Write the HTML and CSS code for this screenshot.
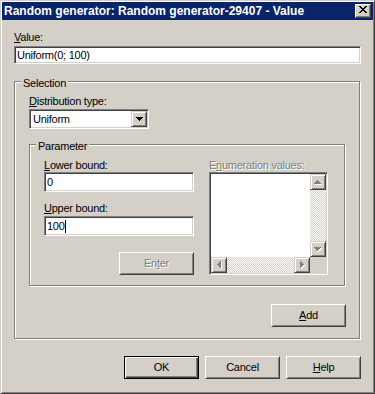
FILE: index.html
```html
<!DOCTYPE html>
<html lang="en">
<head>
    <meta charset="UTF-8">
    <title>Random generator: Random generator-29407 - Value</title>
    <link rel="stylesheet" href="styles.css">
</head>
<body>

    <div class="dialog">
        <div class="titlebar">
            <span class="title">Random generator: Random generator-29407 - Value</span>
            <span class="close-btn">
                <svg width="8" height="7" viewBox="0 0 8 7" shape-rendering="crispEdges">
                    <path d="M0 0h2v1h-2zM6 0h2v1h-2zM1 1h2v1h-2zM5 1h2v1h-2zM2 2h4v1h-4zM3 3h2v1h-2zM2 4h4v1h-4zM1 5h2v1h-2zM5 5h2v1h-2zM0 6h2v1h-2zM6 6h2v1h-2z" fill="#000"/>
                </svg>
            </span>
        </div>

        <div class="content">
            <div class="label"><u>V</u>alue:</div>
            <div class="field field-value">Uniform(0; 100)</div>

            <div class="group group-selection">
                <div class="group-title">Selection</div>
                <div class="label label-dist"><u>D</u>istribution type:</div>
                <div class="combo">
                    <span class="combo-text">Uniform</span>
                    <span class="combo-btn">
                        <svg width="7" height="4" viewBox="0 0 7 4" shape-rendering="crispEdges">
                            <path d="M0 0h7v1h-7zM1 1h5v1h-5zM2 2h3v1h-3zM3 3h1v1h-1z" fill="#000"/>
                        </svg>
                    </span>
                </div>

                <div class="group group-param">
                    <div class="group-title">Parameter</div>
                    <div class="param-cols">
                        <div class="param-left">
                            <div class="label"><u>L</u>ower bound:</div>
                            <div class="field field-bound">0</div>
                            <div class="label label-upper"><u>U</u>pper bound:</div>
                            <div class="field field-bound field-upper">100<span class="caret"></span></div>
                            <button class="btn btn-enter" disabled>En<u>t</u>er</button>
                        </div>
                        <div class="param-right">
                            <div class="label disabled">E<u>n</u>umeration values:</div>
                            <div class="listbox">
                                <div class="list-area"></div>
                                <div class="vscroll">
                                    <span class="sb-btn">
                                        <svg width="8" height="5" viewBox="0 0 8 5" shape-rendering="crispEdges">
                                            <path d="M4 1h1v1h-1zM3 2h3v1h-3zM2 3h5v1h-5zM1 4h7v1h-7z" fill="#fff"/>
                                            <path d="M3 0h1v1h-1zM2 1h3v1h-3zM1 2h5v1h-5zM0 3h7v1h-7z" fill="#808080"/>
                                        </svg>
                                    </span>
                                    <span class="sb-track"></span>
                                    <span class="sb-btn">
                                        <svg width="8" height="5" viewBox="0 0 8 5" shape-rendering="crispEdges">
                                            <path d="M1 1h7v1h-7zM2 2h5v1h-5zM3 3h3v1h-3zM4 4h1v1h-1z" fill="#fff"/>
                                            <path d="M0 0h7v1h-7zM1 1h5v1h-5zM2 2h3v1h-3zM3 3h1v1h-1z" fill="#808080"/>
                                        </svg>
                                    </span>
                                </div>
                                <div class="hscroll">
                                    <span class="sb-btn">
                                        <svg width="5" height="8" viewBox="0 0 5 8" shape-rendering="crispEdges">
                                            <path d="M1 4h1v1h-1zM2 3h1v3h-1zM3 2h1v5h-1zM4 1h1v7h-1z" fill="#fff"/>
                                            <path d="M0 3h1v1h-1zM1 2h1v3h-1zM2 1h1v5h-1zM3 0h1v7h-1z" fill="#808080"/>
                                        </svg>
                                    </span>
                                    <span class="sb-track"></span>
                                    <span class="sb-btn">
                                        <svg width="5" height="8" viewBox="0 0 5 8" shape-rendering="crispEdges">
                                            <path d="M1 1h1v7h-1zM2 2h1v5h-1zM3 3h1v3h-1zM4 4h1v1h-1z" fill="#fff"/>
                                            <path d="M0 0h1v7h-1zM1 1h1v5h-1zM2 2h1v3h-1zM3 3h1v1h-1z" fill="#808080"/>
                                        </svg>
                                    </span>
                                </div>
                                <div class="corner"></div>
                            </div>
                        </div>
                    </div>
                </div>

                <button class="btn btn-add"><u>A</u>dd</button>
            </div>

            <div class="actions">
                <button class="btn btn-default">OK</button>
                <button class="btn">Cancel</button>
                <button class="btn"><u>H</u>elp</button>
            </div>
        </div>
    </div>

</body>
</html>
```

FILE: styles.css
```css
body {
    margin: 0;
    padding: 0;
    background-color: #d4d0c8;
    font-family: 'Liberation Sans', Arial, sans-serif;
    font-size: 11px;
    letter-spacing: -0.25px;
    color: #000;
}

/* window frame */
.dialog {
    width: 375px;
    height: 394px;
    box-sizing: border-box;
    padding: 1px;
    border: 1px solid;
    border-color: #d4d0c8 #404040 #404040 #d4d0c8;
    box-shadow: inset 1px 1px #fff, inset -1px -1px #808080;
    background-color: #d4d0c8;
    display: flex;
    flex-direction: column;
}

.titlebar {
    height: 18px;
    background-color: #0a246a;
    display: flex;
    align-items: center;
    justify-content: space-between;
    padding: 0 2px;
}

.title {
    font-weight: bold;
    font-size: 12px;
    letter-spacing: 0;
    line-height: 17px;
    padding-top: 1px;
    color: #fff;
    white-space: nowrap;
}

.close-btn {
    width: 16px;
    height: 14px;
    box-sizing: border-box;
    border: 1px solid;
    border-color: #fff #404040 #404040 #fff;
    box-shadow: inset -1px -1px #808080;
    background-color: #d4d0c8;
    display: flex;
    justify-content: center;
    align-items: flex-start;
    padding-top: 1px;
}

.close-btn svg {
    display: block;
}

.content {
    padding: 11px 12px 0 12px;
    display: flex;
    flex-direction: column;
}

.label {
    line-height: 13px;
    white-space: nowrap;
}

.disabled {
    color: #808080;
    text-shadow: 1px 1px #fff;
}

/* sunken edit fields */
.field,
.combo,
.listbox {
    box-sizing: border-box;
    border: 1px solid;
    border-color: #808080 #fff #fff #808080;
    box-shadow: inset 1px 1px #404040, inset -1px -1px #d4d0c8;
    background-color: #fff;
}

.field {
    padding: 1px 2px;
    white-space: nowrap;
}

.field-value {
    margin-top: 2px;
    height: 18px;
    line-height: 14px;
}

.field-bound {
    height: 20px;
    line-height: 16px;
}

.field-upper {
    margin-top: 1px;
}

.caret {
    display: inline-block;
    width: 1px;
    height: 13px;
    background-color: #000;
    vertical-align: -3px;
}

/* etched group boxes */
.group {
    border: 1px solid #808080;
    box-shadow: inset 1px 1px #fff, 1px 1px #fff;
    display: flex;
    flex-direction: column;
    margin-right: 1px;
}

.group-title {
    align-self: flex-start;
    line-height: 13px;
    margin: -5px 0 0 -8px;
    padding: 0 2px;
    background-color: #d4d0c8;
}

.group-selection {
    margin-top: 17px;
    padding: 0 13px 11px 14px;
}

.label-dist {
    margin-top: 5px;
}

.combo {
    margin-top: 1px;
    width: 120px;
    height: 20px;
    padding: 1px;
    display: flex;
    align-self: flex-start;
}

.combo-text {
    flex: 1;
    line-height: 16px;
    padding-left: 2px;
}

.combo-btn {
    width: 16px;
    height: 16px;
    box-sizing: border-box;
    border: 1px solid;
    border-color: #d4d0c8 #404040 #404040 #d4d0c8;
    box-shadow: inset 1px 1px #fff, inset -1px -1px #808080;
    background-color: #d4d0c8;
    display: flex;
    align-items: center;
    justify-content: center;
}

.group-param {
    margin-top: 15px;
    padding: 0 14px 10px 14px;
}

.param-cols {
    margin-top: 6px;
    display: flex;
    gap: 15px;
    align-items: flex-start;
}

.param-left {
    width: 150px;
    display: flex;
    flex-direction: column;
}

.label-upper {
    margin-top: 10px;
}

.param-right {
    width: 119px;
    display: flex;
    flex-direction: column;
}

.listbox {
    height: 103px;
    padding: 1px;
    display: grid;
    grid-template-columns: 1fr 16px;
    grid-template-rows: 1fr 16px;
}

.list-area {
    background-color: #fff;
}

.vscroll {
    display: flex;
    flex-direction: column;
}

.hscroll {
    display: flex;
}

.sb-track {
    flex: 1;
    background: repeating-conic-gradient(#d4d0c8 0 25%, #fff 0 50%) 0 0 / 2px 2px;
}

.sb-btn {
    width: 16px;
    height: 16px;
    box-sizing: border-box;
    border: 1px solid;
    border-color: #d4d0c8 #404040 #404040 #d4d0c8;
    box-shadow: inset 1px 1px #fff, inset -1px -1px #808080;
    background-color: #d4d0c8;
    display: flex;
    align-items: center;
    justify-content: center;
}

.sb-btn svg {
    display: block;
}

.corner {
    background-color: #d4d0c8;
}

/* push buttons */
.btn {
    width: 75px;
    height: 23px;
    box-sizing: border-box;
    padding: 0;
    margin: 0;
    font-family: inherit;
    font-size: 11px;
    letter-spacing: -0.25px;
    color: #000;
    background-color: #d4d0c8;
    border: 1px solid;
    border-color: #fff #404040 #404040 #fff;
    box-shadow: inset 1px 1px #d4d0c8, inset -1px -1px #808080;
    text-align: center;
    line-height: 19px;
    border-radius: 0;
}

.btn-enter {
    margin-top: 16px;
    align-self: flex-end;
    color: #808080;
    text-shadow: 1px 1px #fff;
}

.btn-add {
    margin-top: 18px;
    align-self: flex-end;
}

.btn-default {
    border-color: #000;
    box-shadow: inset 1px 1px #fff, inset -1px -1px #404040, inset -2px -2px #808080;
}

.actions {
    margin-top: 17px;
    display: flex;
    justify-content: flex-end;
    gap: 6px;
}
```
